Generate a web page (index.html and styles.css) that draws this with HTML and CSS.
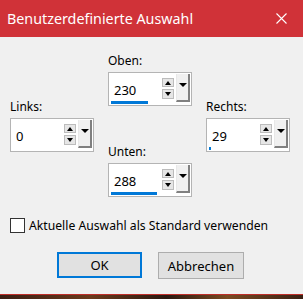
FILE: index.html
```html
<!DOCTYPE html>
<html lang="de">
<head>
    <meta charset="UTF-8">
    <meta name="viewport" content="width=device-width, initial-scale=1.0">
    <title>Benutzerdefinierte Auswahl</title>

    <link rel="stylesheet" href="styles.css">
</head>

<body>
    <div class="dialog">
        <header class="titlebar">
            <span class="title">Benutzerdefinierte Auswahl</span>
            <svg class="close" width="11" height="11" viewBox="0 0 11 11">
                <path d="M0.5 0.5 L10.5 10.5 M10.5 0.5 L0.5 10.5" stroke="#fff" stroke-width="1.1" fill="none"/>
            </svg>
        </header>

        <main class="content">
            <div class="fields">
                <div class="side">
                    <div class="field">
                        <div class="label">Links:</div>
                        <div class="spinbox">
                            <span class="value">0</span>
                            <div class="arrows">
                                <span class="arrow up"></span>
                                <span class="arrow down"></span>
                            </div>
                            <span class="drop"></span>
                        </div>
                    </div>
                </div>

                <div class="middle">
                    <div class="field">
                        <div class="label">Oben:</div>
                        <div class="spinbox">
                            <span class="value">230</span>
                            <div class="arrows">
                                <span class="arrow up"></span>
                                <span class="arrow down"></span>
                            </div>
                            <span class="drop"></span>
                            <span class="bar" style="width: 37px"></span>
                        </div>
                    </div>
                    <div class="field">
                        <div class="label">Unten:</div>
                        <div class="spinbox">
                            <span class="value">288</span>
                            <div class="arrows">
                                <span class="arrow up"></span>
                                <span class="arrow down"></span>
                            </div>
                            <span class="drop"></span>
                            <span class="bar" style="width: 46px"></span>
                        </div>
                    </div>
                </div>

                <div class="side">
                    <div class="field">
                        <div class="label">Rechts:</div>
                        <div class="spinbox">
                            <span class="value">29</span>
                            <div class="arrows">
                                <span class="arrow up"></span>
                                <span class="arrow down"></span>
                            </div>
                            <span class="drop"></span>
                            <span class="bar" style="width: 2px"></span>
                        </div>
                    </div>
                </div>
            </div>

            <label class="check">
                <span class="checkbox"></span>
                <span>Aktuelle Auswahl als Standard verwenden</span>
            </label>

            <div class="buttons">
                <button class="btn default">OK</button>
                <button class="btn">Abbrechen</button>
            </div>
        </main>
    </div>
    <div class="backdrop"></div>
</body>
</html>
```

FILE: styles.css
```css
body{
    margin: 0;
    font-family: "Noto Sans", "Open Sans", sans-serif;
    font-size: 12px;
    color: #000;
    background-color: #f0f0f0;
    height: 299px;
    overflow: hidden;
}
.dialog
{
    height: 294px;
    background-color: #f0f0f0;
}
.titlebar
{
    height: 37px;
    background-color: rgb(208, 50, 56);
    color: #fff;
    display: flex;
    align-items: center;
    justify-content: space-between;
    padding: 0 16px 0 7px;
    box-sizing: border-box;
}
.title{
    font-size: 14.3px;
    margin-top: -1px;
}
.close{
    display: block;
    margin-top: -1px;
}
.content{
    padding: 16px 0 0 10px;
}
.fields{
    display: grid;
    grid-template-columns: 84px 84px 84px;
    column-gap: 14px;
}
.side{
    display: flex;
    align-items: center;
    padding-top: 1px;
}
.side .field{
    flex: 1;
}
.middle{
    display: flex;
    flex-direction: column;
    gap: 38px;
}
.label{
    line-height: 16px;
    height: 16px;
    margin-bottom: 3px;
}
.spinbox{
    position: relative;
    height: 34px;
    box-sizing: border-box;
    border: 1px solid #b4b4b4;
    background-color: #fff;
    display: flex;
    align-items: flex-start;
    padding: 1px 1px 0 5px;
}
.value{
    flex: 1;
    line-height: 16px;
    margin-top: 8px;
    font-size: 13px;
}
.arrows{
    display: flex;
    flex-direction: column;
    gap: 2px;
    margin-top: 4px;
    margin-right: 2px;
}
.arrow{
    width: 12px;
    height: 9px;
    box-sizing: border-box;
    border: 1px solid #bcbcbc;
    background-color: #e6e6e6;
    display: flex;
    align-items: center;
    justify-content: center;
}
.arrow.down{
    height: 10px;
}
.arrow::after{
    content: "";
    border-left: 3.5px solid transparent;
    border-right: 3.5px solid transparent;
}
.up::after{
    border-bottom: 4px solid #000;
}
.down::after{
    border-top: 4px solid #000;
}
.drop{
    width: 14px;
    height: 28px;
    box-sizing: border-box;
    border-right: 2px solid #808080;
    border-bottom: 2px solid #808080;
    border-left: 1px solid #e8e8e8;
    background-color: #f0f0f0;
    display: flex;
    justify-content: center;
    padding-top: 9px;
}
.drop::after{
    content: "";
    height: 0;
    border-left: 4px solid transparent;
    border-right: 4px solid transparent;
    border-top: 4px solid #000;
}
.bar{
    position: absolute;
    left: 2px;
    bottom: 1px;
    height: 3px;
    background-color: #0078d7;
}
.check{
    display: flex;
    align-items: center;
    gap: 4px;
    margin-top: 20px;
    font-size: 12.2px;
}
.checkbox{
    width: 15px;
    height: 15px;
    box-sizing: border-box;
    border: 1px solid #333;
    background-color: #fff;
}
.buttons{
    display: flex;
    gap: 16px;
    margin: 18px 0 0 47px;
}
.btn{
    width: 86px;
    height: 27px;
    font-family: inherit;
    font-size: 13px;
    background-color: #e1e1e1;
    border: 1px solid #adadad;
    padding: 0;
    color: #000;
}
.btn.default{
    border: 2px solid #0078d7;
    width: 85px;
    height: 26px;
}
.backdrop{
    height: 5px;
    border-top: 1px solid rgb(190, 45, 40);
    background: linear-gradient(90deg, #3a1e14, #6b3a1c 30%, #2a1810 55%, #7a4a22 75%, #3a2014);
}
```
